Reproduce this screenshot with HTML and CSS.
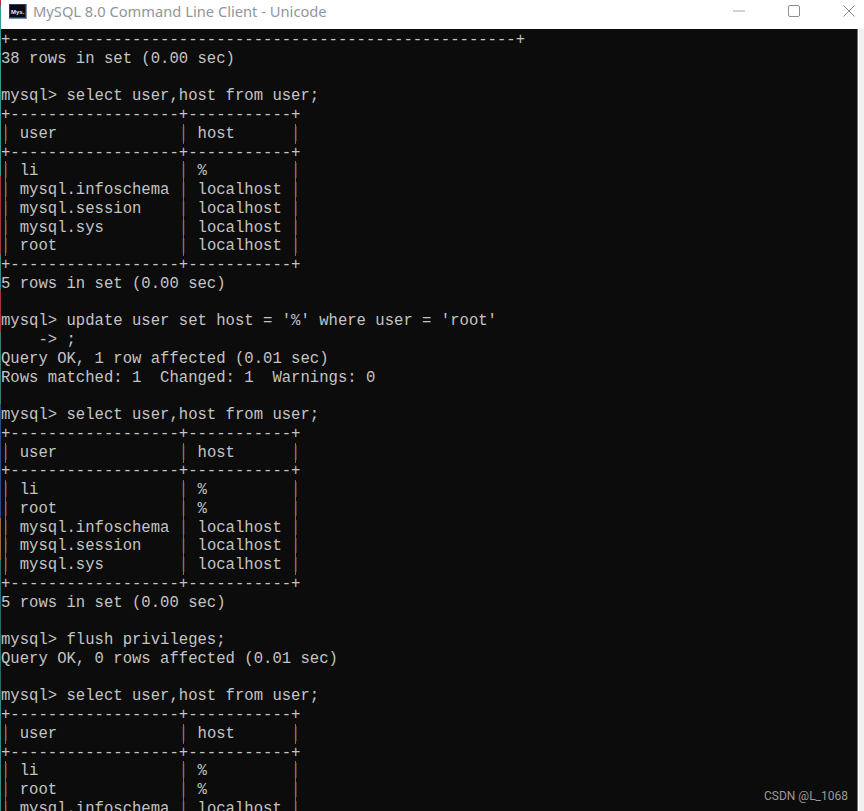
FILE: index.html
```html
<!DOCTYPE html>
<html lang="en">
<head>
<meta charset="utf-8">
<title>MySQL 8.0 Command Line Client - Unicode</title>
<link rel="stylesheet" href="styles.css">
</head>
<body>
<div class="window">
  <header class="titlebar">
    <svg class="app-icon" width="18" height="15" viewBox="0 0 18 15"><rect width="18" height="15" fill="#6f93b8"/><rect width="17" height="14" fill="#2c3f58"/><rect x="1" y="1" width="15" height="12" fill="#0b0b14"/><text class="icon-text" x="2" y="9.500">Mys.</text></svg>
    <span class="title">MySQL 8.0 Command Line Client - Unicode</span>
    <div class="controls">
      <svg width="12" height="12" viewBox="0 0 12 12"><path d="M0 6H12" stroke="#a4a4a4" stroke-width="1"/></svg>
      <svg width="12" height="12" viewBox="0 0 12 12"><rect x="0.5" y="0.5" width="11" height="11" rx="1.5" fill="none" stroke="#8e8e8e" stroke-width="1"/></svg>
      <svg width="12" height="12" viewBox="0 0 12 12"><path d="M0.5 0.500L11.500 11.500M11.500 0.500L0.500 11.500" stroke="#8e8e8e" stroke-width="1"/></svg>
    </div>
  </header>
  <div class="body">
<pre class="console">+------------------------------------------------------+
38 rows in set (0.00 sec)

mysql&gt; select user,host from user;
+------------------+-----------+
<span class="bar">|</span> user             <span class="bar">|</span> host      <span class="bar">|</span>
+------------------+-----------+
<span class="bar">|</span> li               <span class="bar">|</span> %         <span class="bar">|</span>
<span class="bar">|</span> mysql.infoschema <span class="bar">|</span> localhost <span class="bar">|</span>
<span class="bar">|</span> mysql.session    <span class="bar">|</span> localhost <span class="bar">|</span>
<span class="bar">|</span> mysql.sys        <span class="bar">|</span> localhost <span class="bar">|</span>
<span class="bar">|</span> root             <span class="bar">|</span> localhost <span class="bar">|</span>
+------------------+-----------+
5 rows in set (0.00 sec)

mysql&gt; update user set host = '%' where user = 'root'
    -&gt; ;
Query OK, 1 row affected (0.01 sec)
Rows matched: 1  Changed: 1  Warnings: 0

mysql&gt; select user,host from user;
+------------------+-----------+
<span class="bar">|</span> user             <span class="bar">|</span> host      <span class="bar">|</span>
+------------------+-----------+
<span class="bar">|</span> li               <span class="bar">|</span> %         <span class="bar">|</span>
<span class="bar">|</span> root             <span class="bar">|</span> %         <span class="bar">|</span>
<span class="bar">|</span> mysql.infoschema <span class="bar">|</span> localhost <span class="bar">|</span>
<span class="bar">|</span> mysql.session    <span class="bar">|</span> localhost <span class="bar">|</span>
<span class="bar">|</span> mysql.sys        <span class="bar">|</span> localhost <span class="bar">|</span>
+------------------+-----------+
5 rows in set (0.00 sec)

mysql&gt; flush privileges;
Query OK, 0 rows affected (0.01 sec)

mysql&gt; select user,host from user;
+------------------+-----------+
<span class="bar">|</span> user             <span class="bar">|</span> host      <span class="bar">|</span>
+------------------+-----------+
<span class="bar">|</span> li               <span class="bar">|</span> %         <span class="bar">|</span>
<span class="bar">|</span> root             <span class="bar">|</span> %         <span class="bar">|</span>
<span class="bar">|</span> mysql.infoschema <span class="bar">|</span> localhost <span class="bar">|</span></pre>
    <span class="watermark">CSDN @L_1068</span>
  </div>
</div>
</body>
</html>
```
FILE: styles.css
```css
html, body {
  margin: 0;
  height: 100%;
  overflow: hidden;
  background: #f0f0f0;
}
.window {
  display: flex;
  flex-direction: column;
  height: 811px;
  width: 864px;
  box-sizing: border-box;
  padding-left: 1px;
  background-color: #f0f0f0;
  background-repeat: no-repeat;
  background-size: 1px 100%;
  background-image: linear-gradient(to bottom,
    #a8323a 0 6px,
    #2f9d93 6px 176px,
    #a8323a 176px 254px,
    #3a8a80 254px 290px,
    #a8323a 290px 332px,
    #3a7f70 332px 404px,
    #2a4a8a 404px 518px,
    #9a6a3a 518px 560px,
    #2a6a6a 560px 700px,
    #2f8f88 700px);
}
.titlebar {
  display: flex;
  align-items: center;
  height: 29px;
  flex: none;
  background: #fff;
  padding: 0 0 7px 8px;
  box-sizing: border-box;
}
.app-icon { flex: none; }
.icon-text {
  font: bold 6px "Liberation Sans", sans-serif;
  fill: #e8ecf2;
}
.title {
  margin-left: 6px;
  font: 14.7px/20px "Noto Sans", sans-serif;
  color: #8f969c;
  white-space: nowrap;
}
.controls {
  margin-left: auto;
  display: flex;
  align-items: center;
  gap: 43px;
  padding-right: 9px;
}
.body {
  position: relative;
  flex: 1;
  min-height: 0;
  margin-right: 6px;
  padding-top: 2px;
  background: #0c0c0c;
  border-right: 1px solid #6e6e6e;
  box-shadow: 1px 0 0 #fff;
  overflow: hidden;
}
.console {
  margin: 0;
  font: 15.6px/18.75px "Liberation Mono", monospace;
  color: #c4c4c4;
  white-space: pre;
}
.bar {
  position: relative;
  color: #8a6f55;
}
.bar::after {
  content: "";
  position: absolute;
  left: calc(50% - 0.5px);
  top: -1px;
  bottom: -1px;
  width: 1px;
  background: #8a6f55;
}
.watermark {
  position: absolute;
  right: 9px;
  bottom: 8px;
  font: 12px/14px Roboto, sans-serif;
  color: #9a9a9a;
}
```
